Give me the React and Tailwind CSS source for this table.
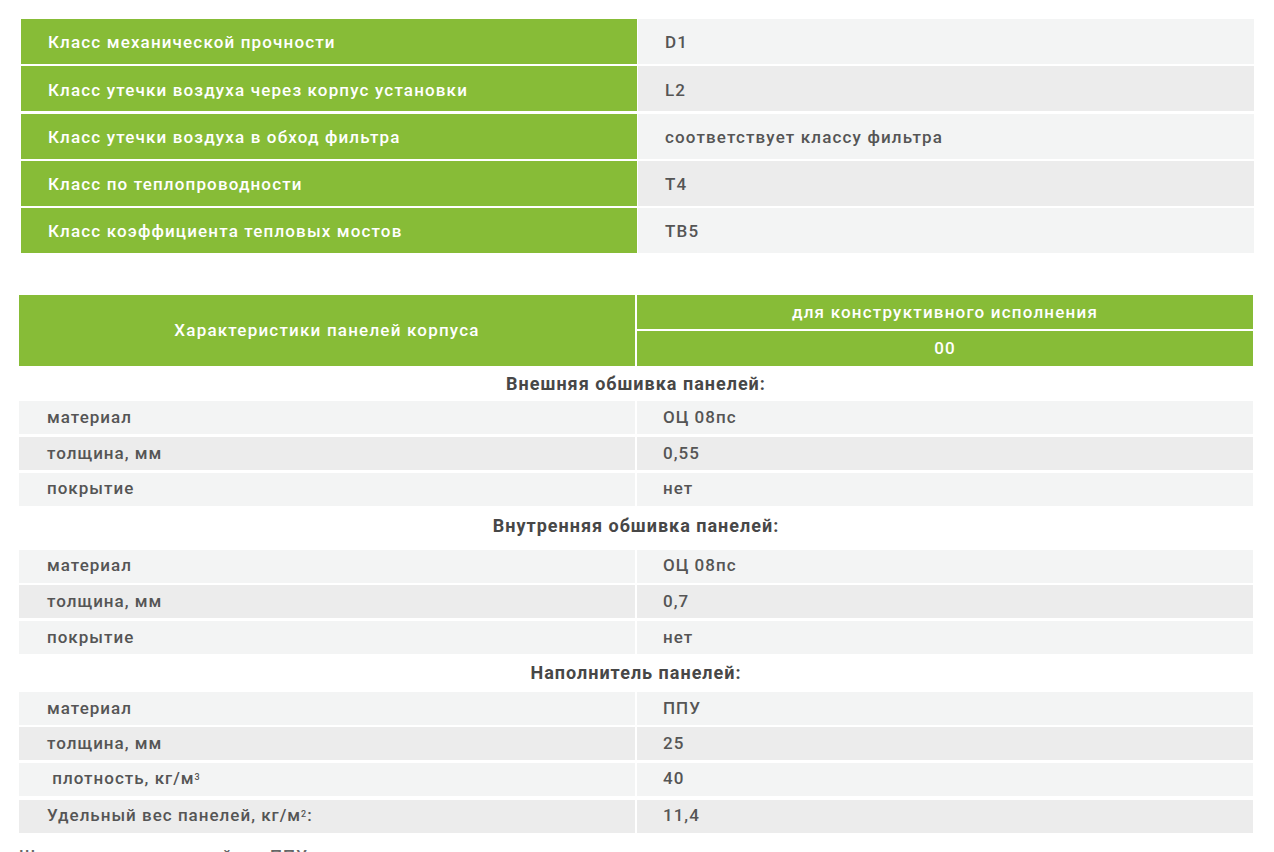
import React from "react";

const top = [
  ["Класс механической прочности", "D1"],
  ["Класс утечки воздуха через корпус установки", "L2"],
  ["Класс утечки воздуха в обход фильтра", "соответствует классу фильтра"],
  ["Класс по теплопроводности", "T4"],
  ["Класс коэффициента тепловых мостов", "TB5"],
];

function DataRow({ label, value, even, className = "" }) {
  const bg = even ? "bg-[#ececec]" : "bg-[#f3f4f4]";
  return (
    <div className={"grid grid-cols-2 gap-x-[2px] h-[33px] tracking-[1px] " + className}>
      <div className={bg + " flex items-center pl-[28px] whitespace-pre"}>{label}</div>
      <div className={bg + " flex items-center pl-[26px]"}>{value}</div>
    </div>
  );
}

function Title({ children, className = "" }) {
  return (
    <div
      className={
        "flex items-center justify-center font-bold text-[18px] tracking-[1px] text-[#474747] " +
        className
      }
    >
      {children}
    </div>
  );
}

export default function App() {
  return (
    <div
      className="min-h-[852px] bg-white text-[17px] font-medium text-[#555555] overflow-hidden"
      style={{ fontFamily: "Roboto, 'Noto Sans', sans-serif" }}
    >
      <div className="pt-[19px] pl-[21px]">
        <div className="w-[1233px] grid grid-cols-2 gap-x-[1px] gap-y-[2.3px] tracking-[1.15px]">
          {top.map(([a, b], i) => (
            <React.Fragment key={i}>
              <div className="h-[45px] bg-[#87bc37] text-white flex items-center pl-[27px] pt-[3px]">
                {a}
              </div>
              <div
                className={
                  "h-[45px] flex items-center pl-[27px] pt-[3px] " +
                  (i % 2 ? "bg-[#ececec]" : "bg-[#f3f4f4]")
                }
              >
                {b}
              </div>
            </React.Fragment>
          ))}
        </div>
      </div>

      <div className="mt-[42px] ml-[19px] w-[1234px]">
        <div className="grid grid-cols-2 gap-x-[2px] h-[71px] text-white tracking-[1.2px]">
          <div className="bg-[#87bc37] flex items-center justify-center">
            Характеристики панелей корпуса
          </div>
          <div className="flex flex-col gap-y-[2px]">
            <div className="h-[34px] bg-[#87bc37] flex items-center justify-center pt-[2px]">
              для конструктивного исполнения
            </div>
            <div className="flex-1 bg-[#87bc37] flex items-center justify-center">00</div>
          </div>
        </div>

        <Title className="h-[35px]">Внешняя обшивка панелей:</Title>
        <DataRow label="материал" value="ОЦ 08пс" />
        <DataRow label="толщина, мм" value="0,55" even className="mt-[2.7px]" />
        <DataRow label="покрытие" value="нет" className="mt-[2.7px]" />

        <Title className="h-[44px] pb-[4px]">Внутренняя обшивка панелей:</Title>
        <DataRow label="материал" value="ОЦ 08пс" />
        <DataRow label="толщина, мм" value="0,7" even className="mt-[2.7px]" />
        <DataRow label="покрытие" value="нет" className="mt-[2.7px]" />

        <Title className="h-[38px]">Наполнитель панелей:</Title>
        <DataRow label="материал" value="ППУ" />
        <DataRow label="толщина, мм" value="25" even className="mt-[2.3px]" />
        <DataRow
          label={
            <span>
              {" плотность, кг/м"}
              <sup className="text-[9px]">3</sup>
            </span>
          }
          value="40"
          className="mt-[2.3px]"
        />
        <DataRow
          label={
            <span>
              Удельный вес панелей, кг/м<sup className="text-[9px]">2</sup>:
            </span>
          }
          value="11,4"
          even
          className="mt-[4px]"
        />
        <div className="mt-[11px] flex text-[#666666] tracking-[1px]">
          <span className="w-[251px]">Шумоизоляция панелей:</span>
          <span>ППУ</span>
        </div>
      </div>
    </div>
  );
}
